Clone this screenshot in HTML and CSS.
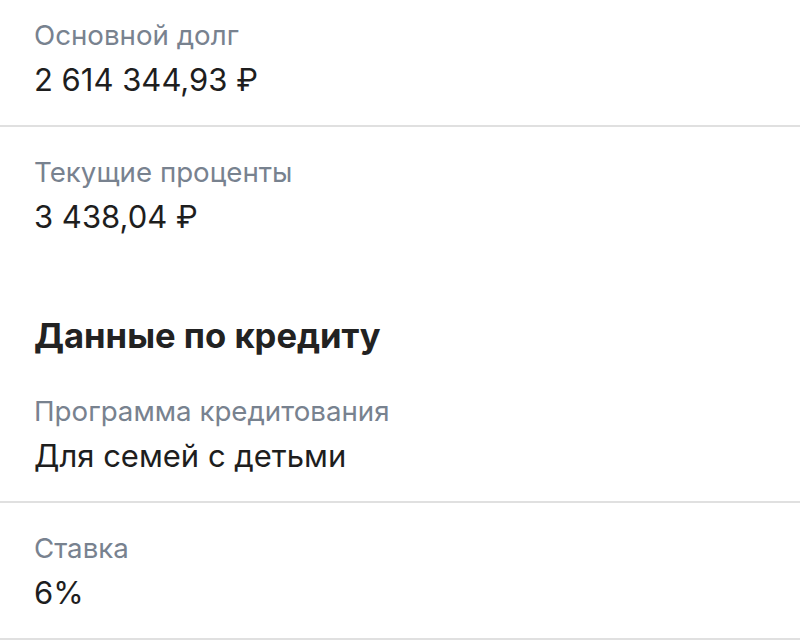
FILE: index.html
```html
<!DOCTYPE html>
<html lang="ru">

<head>
    <meta charset="UTF-8">
    <title>Кредит</title>
    <link rel="stylesheet" href="styles.css">
</head>

<body>

    <main class="details">
        <section class="row row-first">
            <div class="label">Основной долг</div>
            <div class="value">2 614 344,93 ₽</div>
        </section>
        <section class="row row-plain">
            <div class="label">Текущие проценты</div>
            <div class="value">3 438,04 ₽</div>
        </section>

        <h2 class="group-title">Данные по кредиту</h2>

        <section class="row">
            <div class="label">Программа кредитования</div>
            <div class="value">Для семей с детьми</div>
        </section>
        <section class="row">
            <div class="label">Ставка</div>
            <div class="value">6%</div>
        </section>
    </main>

</body>

</html>
```

FILE: styles.css
```css
body {
    margin: 0;
    background-color: #ffffff;
    font-family: Inter, "Noto Sans", sans-serif;
}

.details {
    display: flex;
    flex-direction: column;
}

.row {
    display: flex;
    flex-direction: column;
    gap: 9px;
    padding: 28px 34px 26px;
    border-bottom: 2px solid #e0e0e0;
}

.row-first {
    padding-top: 18px;
}

.row-plain {
    border-bottom: none;
}

.label {
    font-size: 27.7px;
    line-height: 34px;
    color: #78828f;
}

.value {
    font-size: 31px;
    line-height: 38px;
    color: #1e1e1e;
}

.group-title {
    margin: 0;
    padding: 52px 34px 10px;
    font-size: 34.6px;
    line-height: 42px;
    font-weight: 700;
    color: #222222;
}
```
